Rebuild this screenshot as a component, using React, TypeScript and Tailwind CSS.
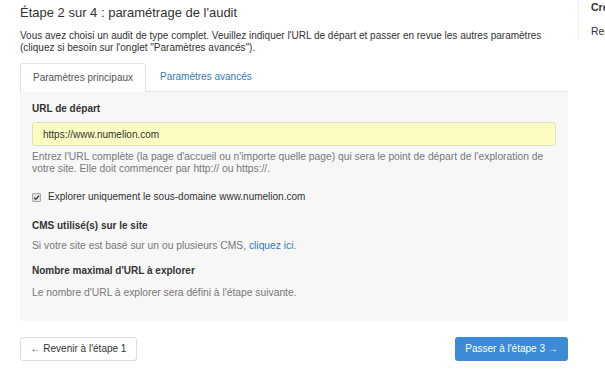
import { useState } from "react";

export default function App() {
  const [onlySub, setOnlySub] = useState(true);

  return (
    <div className="flex h-[375px] w-[605px] overflow-hidden bg-white font-['Liberation_Sans',Arial,sans-serif] text-[10px] leading-[12px] text-[#333]">
      <main className="w-[568px] shrink-0 pl-5">
        <h3 className="pt-[5px] text-[13px] leading-[16px]">
          Étape 2 sur 4 : paramétrage de l'audit
        </h3>
        <p className="mt-[9px]">
          Vous avez choisi un audit de type complet. Veuillez indiquer l'URL de départ et passer en revue les autres paramètres
          (cliquez si besoin sur l'onglet "Paramètres avancés").
        </p>

        <nav className="mt-[9px] flex h-[29px] border-b border-[#e5e5e5]">
          <button className="-mb-px w-[126px] rounded-t-[3px] border border-b-0 border-[#e3e3e3] bg-white text-[#555]">
            Paramètres principaux
          </button>
          <button className="px-[14px] text-[#337ab7]">Paramètres avancés</button>
        </nav>

        <section className="h-[229px] bg-[#f7f7f7] px-3 pt-[11px]">
          <label className="block font-bold">URL de départ</label>
          <input
            defaultValue="https://www.numelion.com"
            className="mt-[7px] h-6 w-full rounded-[3px] border border-[#e0e0c0] bg-[#fcfdc2] px-[10px] text-[10px] text-[#333] outline-none"
          />
          <p className="mt-[5px] text-[10.3px] text-[#777]">
            Entrez l'URL complète (la page d'accueil ou n'importe quelle page) qui sera le point de départ de l'exploration de
            votre site. Elle doit commencer par http:// ou https://.
          </p>

          <label className="mt-[16px] flex cursor-pointer items-center gap-[7px]">
            <input
              type="checkbox"
              checked={onlySub}
              onChange={(e) => setOnlySub(e.target.checked)}
              className="sr-only"
            />
            <span className="flex h-[9px] w-[9px] items-center justify-center rounded-[1px] border border-[#a8a8a8] bg-[#e4e4e4]">
              {onlySub && (
                <svg viewBox="0 0 10 10" className="h-[7px] w-[7px]">
                  <path d="M1.5 5.2 L4 7.6 L8.6 2.4" fill="none" stroke="#333" strokeWidth="1.8" />
                </svg>
              )}
            </span>
            Explorer uniquement le sous-domaine www.numelion.com
          </label>

          <h4 className="mt-[17px] font-bold">CMS utilisé(s) sur le site</h4>
          <p className="mt-[8px] text-[10.3px] text-[#777]">
            Si votre site est basé sur un ou plusieurs CMS,{" "}
            <a href="#" className="text-[#337ab7]">
              cliquez ici
            </a>
            .
          </p>

          <h4 className="mt-[13px] font-bold">Nombre maximal d'URL à explorer</h4>
          <p className="mt-[10px] text-[10.3px] text-[#777]">
            Le nombre d'URL à explorer sera défini à l'étape suivante.
          </p>
        </section>

        <div className="mt-[16px] flex justify-between">
          <button className="h-6 w-[117px] rounded-[3px] border border-[#ddd] bg-white text-[#333]">
            ← Revenir à l'étape 1
          </button>
          <button className="h-6 w-[113px] rounded-[3px] bg-[#3d8bd4] text-white">
            Passer à l'étape 3 →
          </button>
        </div>
      </main>

      <aside className="ml-[10px] h-10 flex-1 border-l border-[#f0f0f0] pl-3 pt-[1px] text-[10.5px]">
        <div className="font-bold whitespace-nowrap">Création</div>
        <div className="mt-[12px] whitespace-nowrap">Rechercher</div>
      </aside>
    </div>
  );
}
